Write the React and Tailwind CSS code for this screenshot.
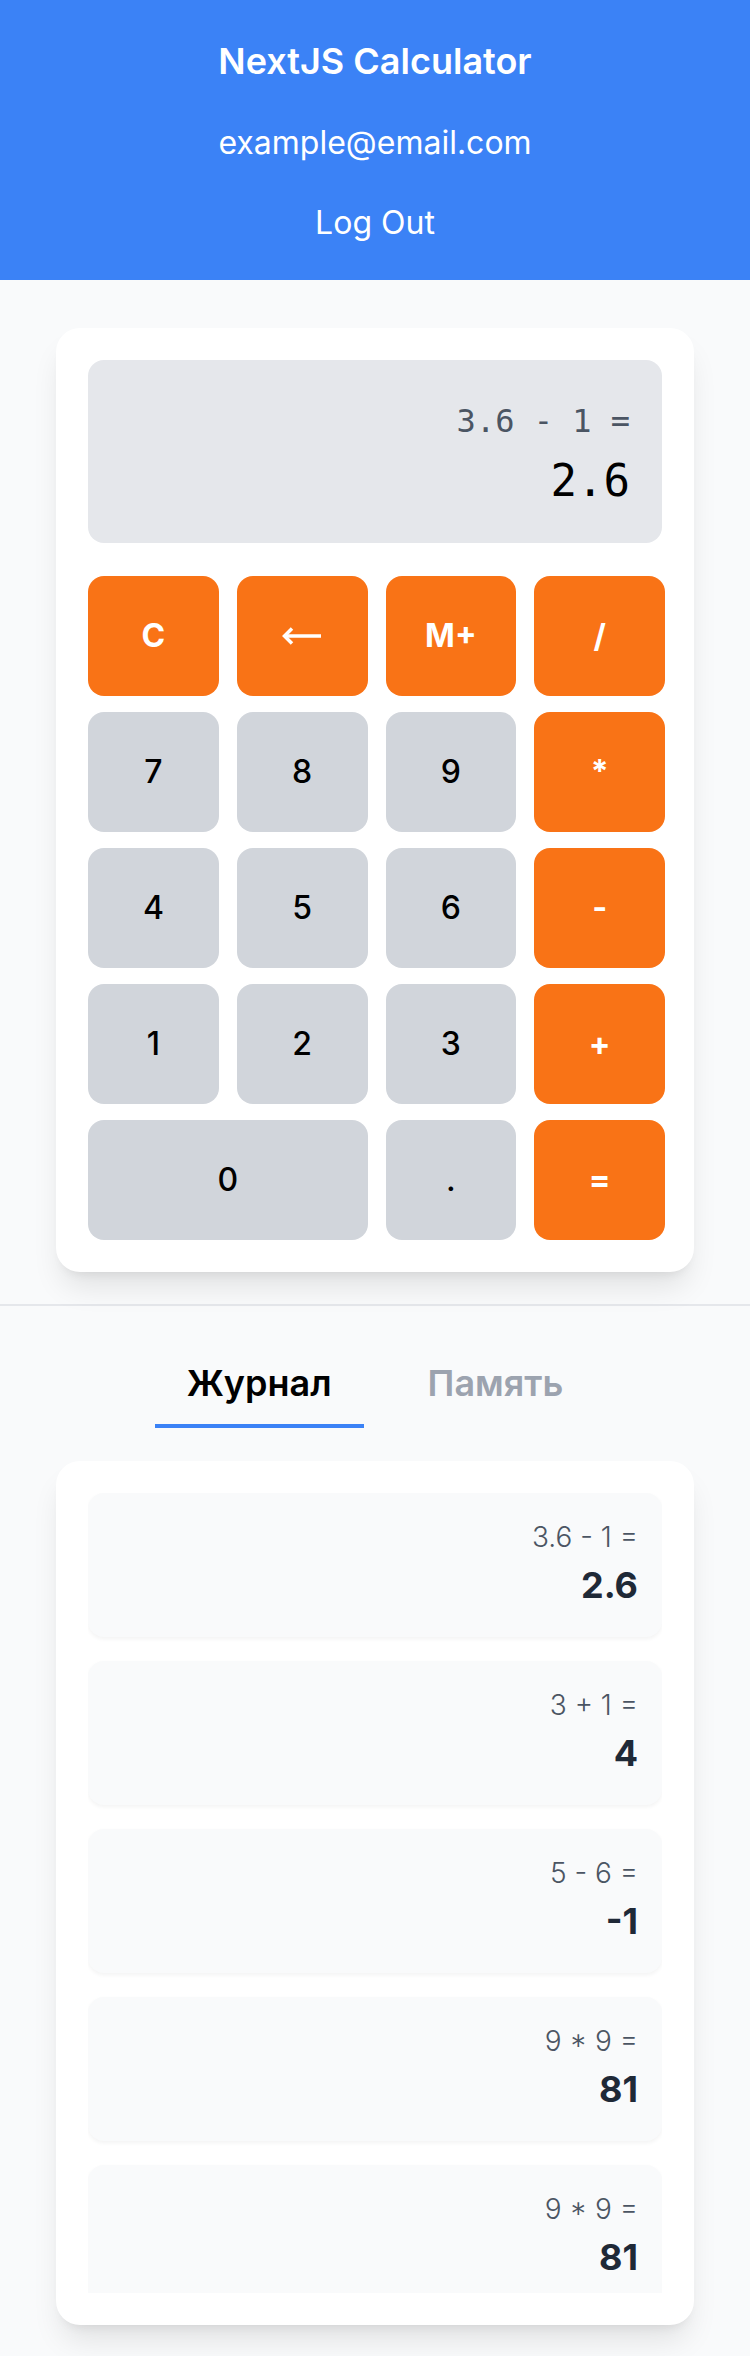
const keys = [
  { label: "C", kind: "op" },
  { label: "back", kind: "op" },
  { label: "M+", kind: "op" },
  { label: "/", kind: "op" },
  { label: "7" },
  { label: "8" },
  { label: "9" },
  { label: "*", kind: "op" },
  { label: "4" },
  { label: "5" },
  { label: "6" },
  { label: "-", kind: "op" },
  { label: "1" },
  { label: "2" },
  { label: "3" },
  { label: "+", kind: "op" },
  { label: "0", wide: true },
  { label: "." },
  { label: "=", kind: "op" },
];

const history = [
  { expr: "3.6 - 1 =", result: "2.6" },
  { expr: "3 + 1 =", result: "4" },
  { expr: "5 - 6 =", result: "-1" },
  { expr: "9 * 9 =", result: "81" },
  { expr: "9 * 9 =", result: "81" },
];

function BackArrow() {
  return (
    <svg width="40" height="18" viewBox="0 0 40 18" fill="none" stroke="white" strokeWidth="3.5">
      <path d="M39 9H3" />
      <path d="M10 1.5L2.5 9l7.5 7.5" strokeLinejoin="miter" />
    </svg>
  );
}

function Key({ label, kind, wide }) {
  const base =
    "h-[120px] rounded-2xl text-[32px] leading-[48px] flex items-center justify-center";
  const color =
    kind === "op"
      ? "bg-[#f97316] text-white font-bold"
      : "bg-[#d1d5db] text-black font-medium";
  return (
    <button className={`${base} ${color} ${wide ? "col-span-2" : ""}`}>
      {label === "back" ? <BackArrow /> : label}
    </button>
  );
}

export default function App() {
  return (
    <div className="min-h-screen bg-[#f9fafb] font-['Inter',sans-serif]">
      <header className="bg-[#3b82f6] text-white flex flex-col items-center pt-[33px] pb-[33px]">
        <h1 className="text-[36px] leading-[56px] font-semibold">NextJS Calculator</h1>
        <p className="mt-[30px] text-[32px] leading-[48px]">example@email.com</p>
        <button className="mt-[32px] text-[32px] leading-[48px]">Log Out</button>
      </header>

      <section className="pt-12 pb-8 px-[56px] border-b-2 border-[#e5e7eb]">
        <div className="bg-white rounded-3xl p-8 shadow-[0_20px_30px_-6px_rgba(0,0,0,0.1),0_8px_12px_-8px_rgba(0,0,0,0.1)]">
          <div className="h-[183px] bg-[#e5e7eb] rounded-2xl px-8 pb-[30px] flex flex-col justify-end items-end font-['DejaVu_Sans_Mono',monospace]">
            <div className="text-[32px] leading-[48px] text-[#4b5563] whitespace-pre">3.6 - 1 =</div>
            <div className="mt-[4px] text-[44px] leading-[64px] text-black">2.6</div>
          </div>
          <div className="mt-[33px] mr-[-3px] grid grid-cols-4 gap-x-[18px] gap-y-4">
            {keys.map((k, i) => (
              <Key key={i} {...k} />
            ))}
          </div>
        </div>
      </section>

      <section className="pt-[33px] pb-8 px-[56px]">
        <div className="flex justify-center gap-8">
          <button className="px-8 pt-4 pb-[13px] border-b-4 border-[#3b82f6] text-[36px] leading-[56px] font-semibold text-black">
            Журнал
          </button>
          <button className="px-8 pt-4 pb-[13px] border-b-4 border-transparent text-[36px] leading-[56px] font-semibold text-[#9ca3af]">
            Память
          </button>
        </div>

        <div className="mt-[33px] bg-white rounded-3xl p-8 shadow-[0_20px_30px_-6px_rgba(0,0,0,0.1),0_8px_12px_-8px_rgba(0,0,0,0.1)]">
          <div className="max-h-[800px] overflow-hidden flex flex-col gap-6">
            {history.map((h, i) => (
              <div
                key={i}
                className="shrink-0 bg-[#f9fafb] rounded-2xl p-6 text-right shadow-[0_2px_4px_0_rgba(0,0,0,0.05)]"
              >
                <div className="text-[28px] leading-[40px] font-light text-[#4b5563]">{h.expr}</div>
                <div className="text-[36px] leading-[56px] font-bold text-[#1f2937]">{h.result}</div>
              </div>
            ))}
          </div>
        </div>
      </section>
    </div>
  );
}
